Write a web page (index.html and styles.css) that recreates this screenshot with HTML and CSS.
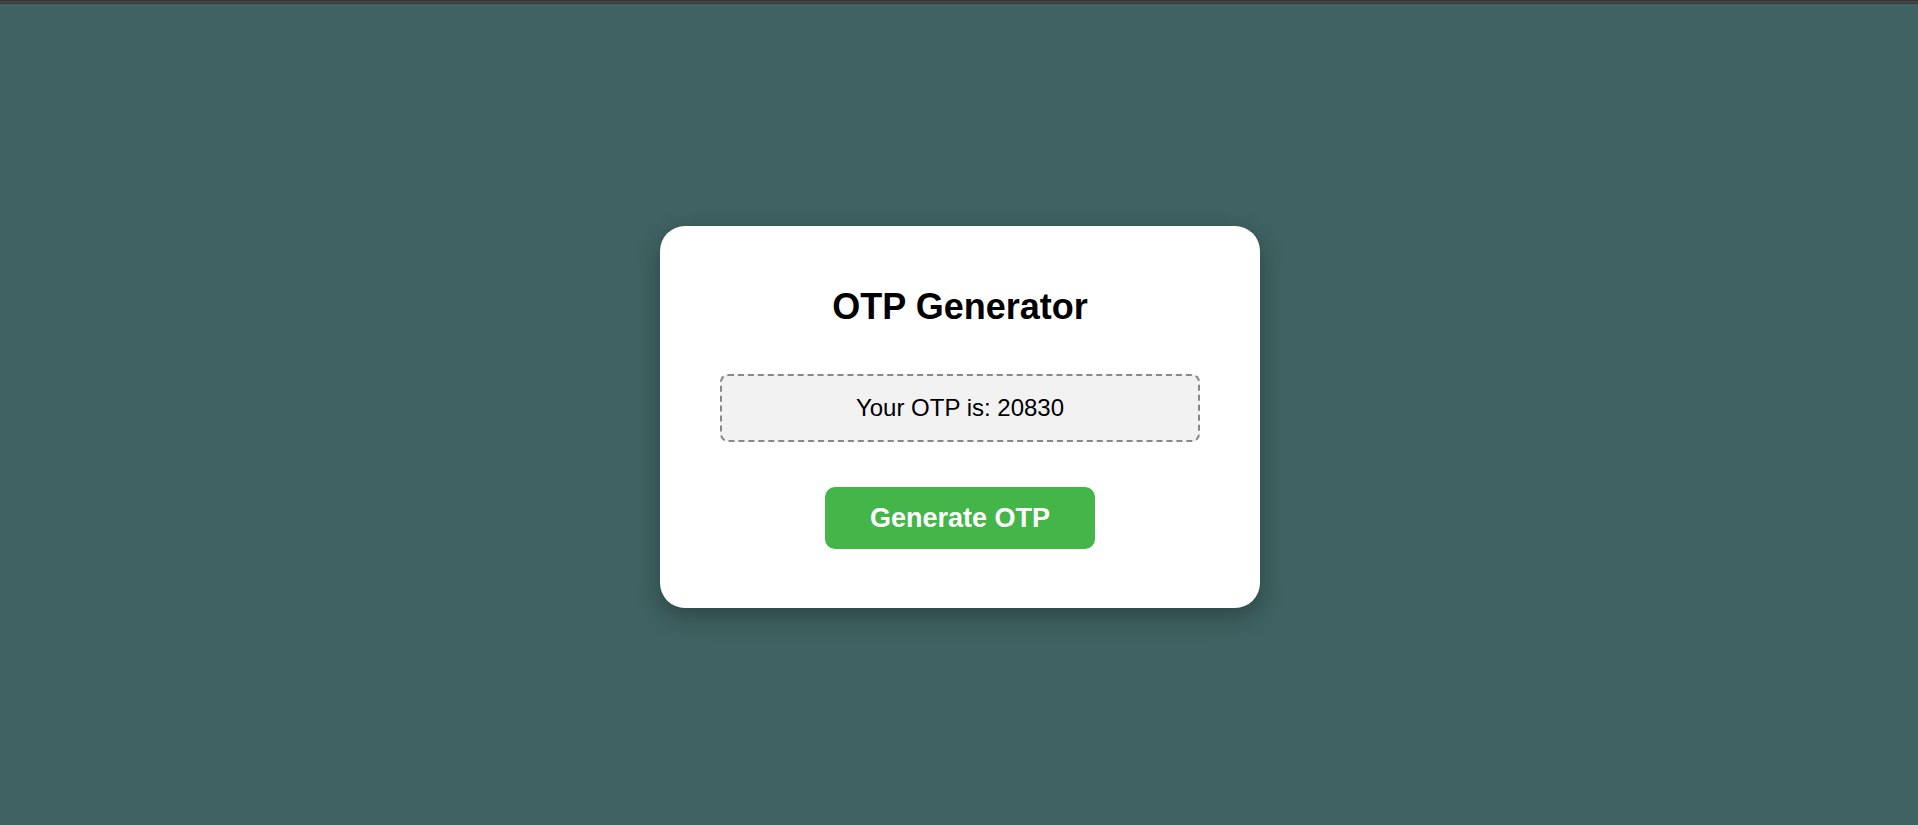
FILE: index.html
```
<!DOCTYPE html>
<html lang="en">
<head>
<meta charset="utf-8">
<title>OTP Generator</title>
<link rel="stylesheet" href="styles.css">
</head>
<body>
<div class="topbar"></div>
<main class="stage">
  <section class="card">
    <h1 class="title">OTP Generator</h1>
    <div class="otp-box">Your OTP is: 20830</div>
    <button class="gen-btn" type="button">Generate OTP</button>
  </section>
</main>
</body>
</html>
```
FILE: styles.css
```
html, body {
  margin: 0;
  padding: 0;
}
body {
  background: #3e6362;
  font-family: "Liberation Sans", Arial, sans-serif;
  color: #000;
}
.topbar {
  height: 4px;
  background: linear-gradient(#333 0 1px, #454545 1px 3px, #3a3a3a 3px 4px);
}
.stage {
  height: 821px;
  box-sizing: border-box;
  padding-top: 5px;
  padding-left: 2px;
  display: flex;
  align-items: center;
  justify-content: center;
}
.card {
  width: 600px;
  box-sizing: border-box;
  padding: 60px 60px 59px;
  background: #fff;
  border-radius: 25px;
  box-shadow: 0 8px 24px rgba(0, 0, 0, 0.3);
  display: flex;
  flex-direction: column;
  align-items: center;
  text-align: center;
}
.title {
  margin: 0 0 47px;
  font-size: 36px;
  line-height: 41px;
  font-weight: bold;
}
.otp-box {
  width: 480px;
  height: 68px;
  box-sizing: border-box;
  border: 2px dashed #888;
  border-radius: 8px;
  background: #f2f2f2;
  font-size: 24px;
  display: flex;
  align-items: center;
  justify-content: center;
  margin-bottom: 45px;
}
.gen-btn {
  height: 62px;
  width: 270px;
  border: none;
  border-radius: 10px;
  background: #44b548;
  color: #fff;
  font-family: "Liberation Sans", Arial, sans-serif;
  font-size: 27px;
  font-weight: bold;
  padding: 0;
  cursor: pointer;
}
```
